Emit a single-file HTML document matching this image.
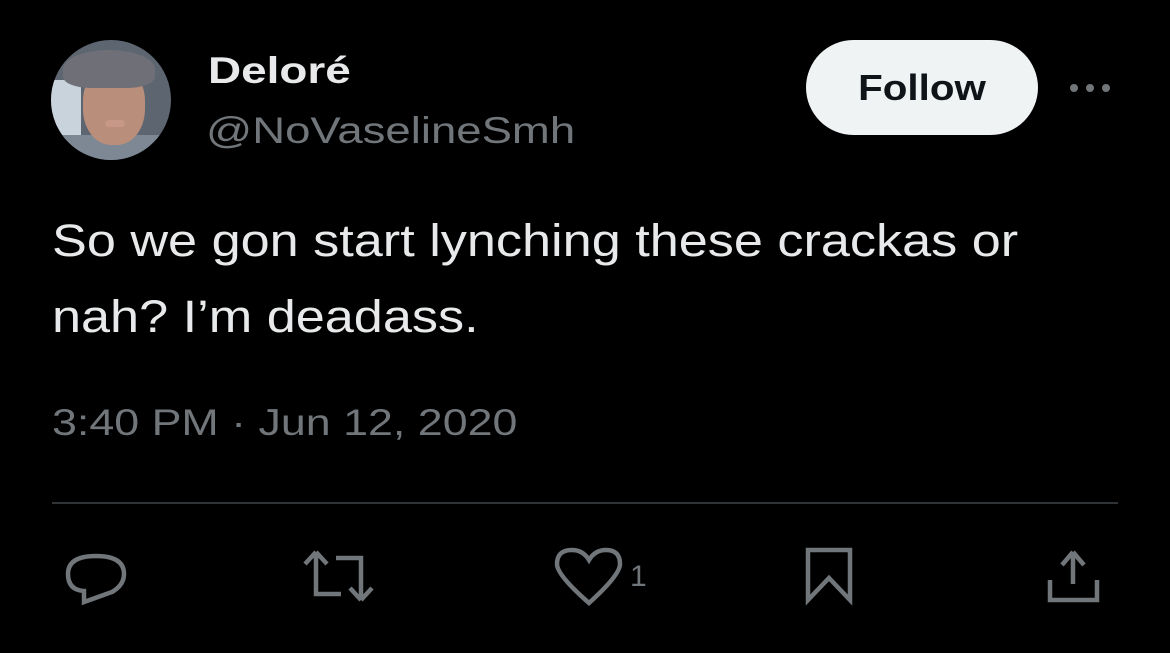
<!DOCTYPE html>
<html><head><meta charset="utf-8"><style>
html,body{margin:0;padding:0;background:#000;width:1170px;height:653px;overflow:hidden;font-family:"Liberation Sans",sans-serif;}
.abs{position:absolute}
.sx{transform-origin:0 0;white-space:nowrap}
</style></head><body>
<div class="abs" style="left:51px;top:40px;width:120px;height:120px;border-radius:50%;overflow:hidden;background:#5d6670">
  <div class="abs" style="left:0;top:40px;width:30px;height:80px;background:#c9d3dc"></div>
  <div class="abs" style="left:0;top:95px;width:120px;height:40px;background:#7d8894"></div>
  <div class="abs" style="left:32px;top:25px;width:62px;height:80px;border-radius:45%;background:#b98e7a"></div>
  <div class="abs" style="left:12px;top:10px;width:92px;height:38px;border-radius:50% 50% 30% 30%;background:#6f7077"></div>
  <div class="abs" style="left:54px;top:80px;width:20px;height:7px;border-radius:4px;background:#c79788"></div>
</div>
<div class="abs sx" style="left:208px;top:50px;color:#e7e9ea;font-size:37px;font-weight:bold;transform:scaleX(1.24)">Deloré</div>
<div class="abs sx" style="left:206px;top:110px;color:#71767b;font-size:37px;transform:scaleX(1.23)">@NoVaselineSmh</div>
<div class="abs" style="left:806px;top:40px;width:232px;height:95px;border-radius:48px;background:#eff3f4;color:#0f1419;font-size:36px;font-weight:bold;display:flex;align-items:center;justify-content:center"><span style="display:inline-block;transform:scaleX(1.12)">Follow</span></div>
<svg class="abs" style="left:1066px;top:80px" width="48" height="16"><circle cx="8" cy="8" r="4" fill="#71767b"/><circle cx="24" cy="8" r="4" fill="#71767b"/><circle cx="40" cy="8" r="4" fill="#71767b"/></svg>
<div class="abs sx" style="left:52px;top:203px;color:#e7e9ea;font-size:45px;line-height:76px;transform:scaleX(1.16)">So we gon start lynching these crackas or<br>nah? I’m deadass.</div>
<div class="abs sx" style="left:52px;top:402px;color:#71767b;font-size:37px;transform:scaleX(1.21)">3:40 PM · Jun 12, 2020</div>
<div class="abs" style="left:52px;top:502px;width:1066px;height:2px;background:#2f3336"></div>
<svg class="abs" style="left:0;top:540px" width="1170" height="80" fill="none" stroke="#71767b" stroke-width="4.5" stroke-linejoin="miter">
  <path d="M84 62 L84 51 Q68 50 68 34 Q68 16 96 16 Q124 16 124 34 Q124 45 112 52 Z"/>
  <path d="M316 12 L305 24 M316 12 L327 24 M316 12 L316 54 L341 54"/>
  <path d="M336 18 L361 18 L361 60 M361 60 L350 48 M361 60 L372 48"/>
  <path d="M589 63 Q557 35 557 24 Q557 10 572 10 Q583 10 589 20 Q595 10 606 10 Q620 10 620 24 Q620 35 589 63 Z"/>
  <path d="M808 10 L850 10 L850 60 L829 38 L808 60 Z"/>
  <path d="M1073 12 L1073 44 M1073 12 L1062 25 M1073 12 L1084 25 M1050 40 L1050 60 L1097 60 L1097 40"/>
</svg>
<div class="abs" style="left:630px;top:560px;color:#71767b;font-size:30px">1</div>
</body></html>
